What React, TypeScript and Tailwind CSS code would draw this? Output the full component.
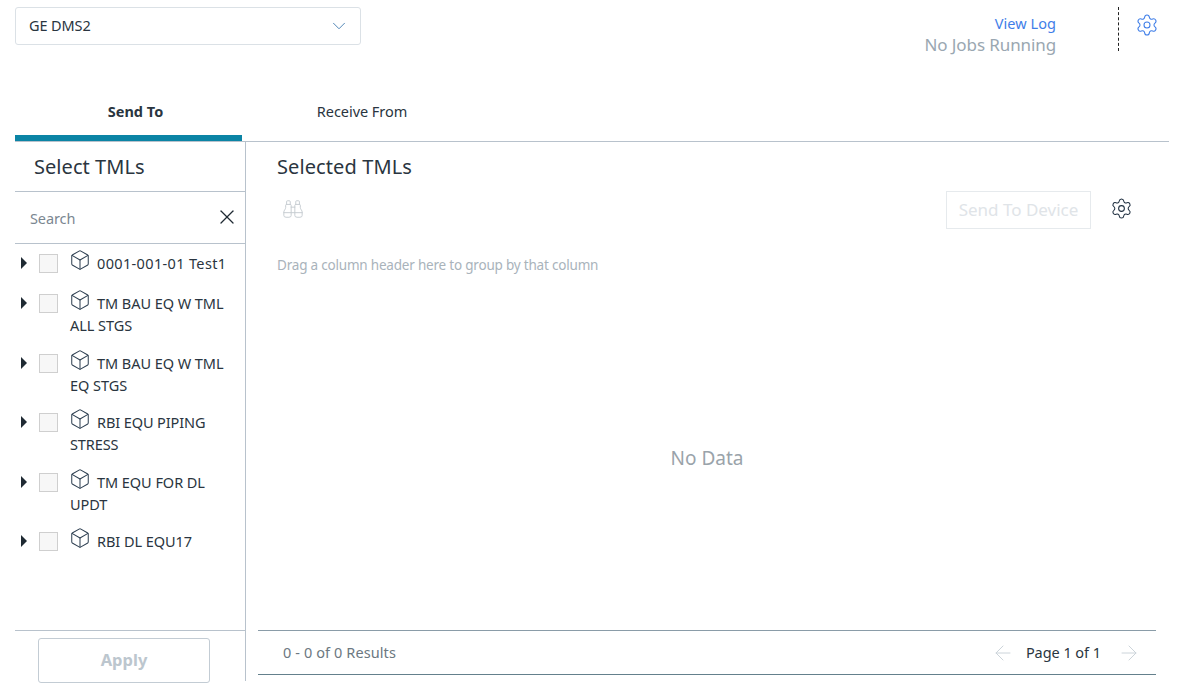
import { Settings, Box, ChevronDown, X, ArrowLeft, ArrowRight, Binoculars } from "lucide-react";

const items = [
  { l: "0001-001-01 Test1", h: "h-[40px]", t: "tracking-[0.35px]" },
  { l: "TM BAU EQ W TML ALL STGS", h: "h-[60px]", t: "tracking-[-0.05px]" },
  { l: "TM BAU EQ W TML EQ STGS", h: "h-[59px]", t: "tracking-[-0.05px]" },
  { l: "RBI EQU PIPING STRESS", h: "h-[60px]", t: "tracking-[-0.1px]" },
  { l: "TM EQU FOR DL UPDT", h: "h-[59px]", t: "tracking-[-0.05px]" },
  { l: "RBI DL EQU17", h: "h-[40px]", t: "tracking-[-0.05px]" },
];

function Row({ l, h, t }: { l: string; h: string; t: string }) {
  return (
    <div className={`flex items-start pt-[8px] ${h}`}>
      <svg width="8" height="14" viewBox="0 0 8 14" className="ml-[5px] mt-[4px] shrink-0">
        <path d="M1 1 L7 7 L1 13 Z" fill="#1f2a33" />
      </svg>
      <div className="ml-[11px] mt-[2px] w-[19px] h-[19px] shrink-0 border border-[#cfcfcf] bg-[#f7f7f7]" />
      <div className={`ml-[12px] w-[158px] text-[14.5px] leading-[22px] text-[#2a3540] ${t}`}>
        <Box size={22} strokeWidth={1.1} className="inline-block align-[-1px] -ml-[1px] mr-[6px] -mt-[7px] -mb-[1px] text-[#2c3e50]" />
        {l}
      </div>
    </div>
  );
}

export default function App() {
  return (
    <div className="w-[1183px] h-[697px] bg-white pl-[15px] pr-[14px] flex flex-col overflow-hidden font-['Noto_Sans',sans-serif] text-[#2a3540]">
      <div className="h-[93px] flex items-start shrink-0">
        <div className="mt-[7px] w-[346px] h-[38px] border border-[#dbe1e6] rounded-[3px] flex items-center justify-between pl-[13px] pr-[10px] text-[14.5px] tracking-[-0.1px]">
          <span>GE DMS2</span>
          <ChevronDown size={22} strokeWidth={0.9} className="text-[#2f6fa8]" />
        </div>
        <div className="ml-auto flex items-start">
          <div className="mt-[12px] flex flex-col items-end leading-[22px]">
            <span className="text-[14.5px] text-[#3f7ee8] tracking-[0.05px]">View Log</span>
            <span className="text-[17px] text-[#9aa7b1] tracking-[-0.1px]">No Jobs Running</span>
          </div>
          <div className="ml-[62px] mt-[7px] h-[44px] border-l border-dashed border-[#222]" />
          <Settings size={24} strokeWidth={1.05} className="ml-[16px] mt-[13px] mr-[10px] text-[#3f7ee8]" />
        </div>
      </div>
      <div className="h-[49px] shrink-0 flex border-b border-[#b8c2cc] text-[14.5px]">
        <div className="w-[227px] h-[48px] border-b-[6px] border-[#0b84a5] flex items-center justify-center pl-[14px] pb-[5px] font-bold">Send To</div>
        <div className="w-[240px] h-[48px] flex items-center justify-center pb-[11px] tracking-[-0.05px]">Receive From</div>
      </div>
      <div className="flex h-[539px]">
        <div className="w-[231px] border-r border-[#b8c2cc] flex flex-col shrink-0">
          <div className="h-[50px] border-b border-[#b8c2cc] pl-[19px] flex items-center text-[20px] tracking-[0.05px] shrink-0">Select TMLs</div>
          <div className="h-[52px] border-b border-[#b8c2cc] flex items-center justify-between pl-[15px] pr-[6px] shrink-0">
            <span className="text-[14.5px] text-[#7b8791] pt-[2px] tracking-[-0.1px]">Search</span>
            <X size={24} strokeWidth={1.3} className="text-[#1f2a33] -mt-[2px]" />
          </div>
          <div className="flex-1">
            {items.map((i) => <Row key={i.l} {...i} />)}
          </div>
          <div className="h-[51px] border-t border-[#b8c2cc] pl-[23px] pt-[7px] shrink-0">
            <div className="w-[172px] h-[45px] border border-[#c3ccd4] rounded-[3px] flex items-center justify-center font-bold text-[16.5px] text-[#bcc6ce]">Apply</div>
          </div>
        </div>
        <div className="flex-1 flex flex-col">
          <div className="pl-[31px] pt-[11px] text-[20px] leading-[28px] tracking-[0.1px] h-[49px] shrink-0">Selected TMLs</div>
          <div className="h-[40px] flex items-start pl-[36px] pr-[36px] shrink-0">
            <Binoculars size={22} strokeWidth={1} className="text-[#c3c9cf] mt-[7px]" />
            <div className="ml-auto w-[145px] h-[38px] border border-[#e6eaed] flex items-center justify-center text-[17px] text-[#e0e4e8]">Send To Device</div>
            <Settings size={23} strokeWidth={1.1} className="ml-[19px] mt-[6px] text-[#1f2f40]" />
          </div>
          <div className="pl-[31px] mt-[24px] text-[13.5px] leading-[20px] text-[#a9b3bb] tracking-[-0.2px] shrink-0">Drag a column header here to group by that column</div>
          <div className="flex-1 flex items-center justify-center text-[19px] text-[#9aa3aa] pt-[11px] pr-[1px]">No Data</div>
          <div className="ml-[12px] mr-[13px] h-[45px] border-t border-b border-t-[#8a9ca8] border-b-[#64808c] flex items-center justify-between pl-[25px] pr-[15px] mb-[6px] shrink-0">
            <span className="text-[14.5px] text-[#6c7881] tracking-[0.1px]">0 - 0 of 0 Results</span>
            <div className="flex items-center text-[14.5px] tracking-[-0.05px]">
              <ArrowLeft size={24} strokeWidth={1} className="text-[#ccd4da] mr-[11px]" />
              <span>Page 1 of 1</span>
              <ArrowRight size={24} strokeWidth={1} className="text-[#ccd4da] ml-[16px]" />
            </div>
          </div>
        </div>
      </div>
    </div>
  );
}
